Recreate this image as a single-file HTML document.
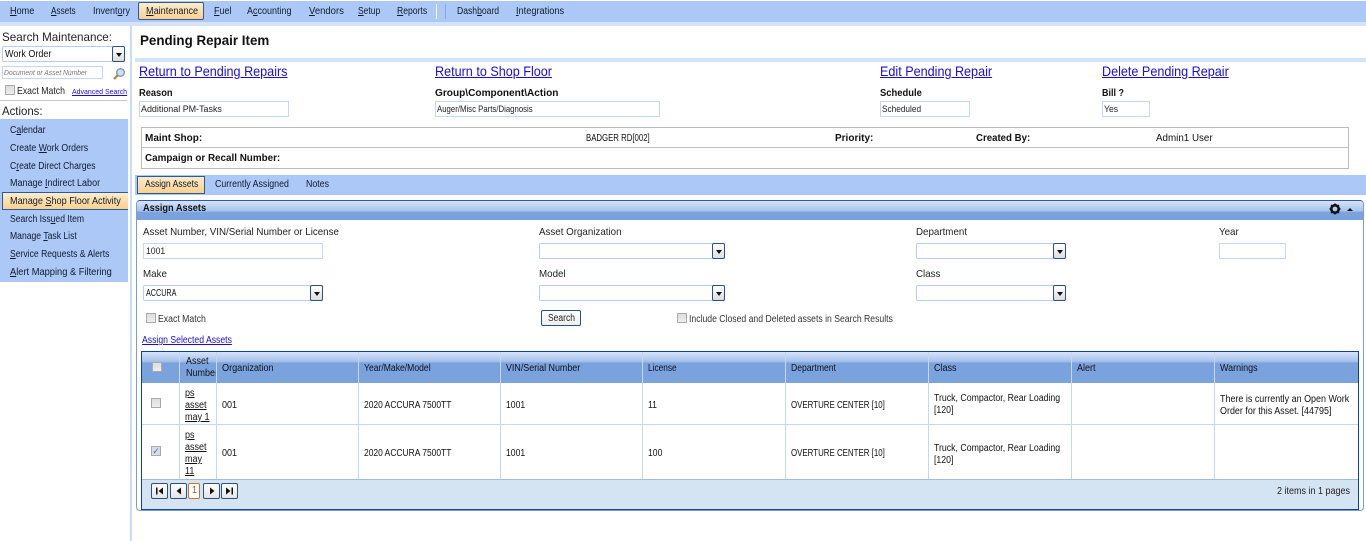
<!DOCTYPE html>
<html><head><meta charset="utf-8"><title>Pending Repair Item</title>
<style>
html,body{margin:0;padding:0;background:#fff}
body{position:relative;width:1366px;height:541px;overflow:hidden;font-family:"Liberation Sans",sans-serif;font-size:10px;color:#111}
.t,.b{position:absolute}
.t{white-space:nowrap;line-height:14px;transform:scaleX(var(--x,.91));transform-origin:0 0}
.m{top:5px;color:#0f1c2e}
.s{left:10px;color:#0f1c2e}
.l{font-size:14px;color:#1a0dd8;text-decoration:underline;top:62px;line-height:18px;--x:.9}
.h{font-weight:bold;color:#111;--x:1}
.f{font-size:10.5px;color:#222;--x:.93}
.i{position:absolute;box-sizing:border-box;background:#fff;border:1px solid #c4d7f5}
.dd{position:absolute;box-sizing:border-box;height:16px;background:#fff;border:1px solid #b9cdf0;border-radius:2px}
.dd i{position:absolute;right:-1px;top:-1px;width:13px;height:16px;box-sizing:border-box;border:1px solid #2a5184;border-radius:2px;background:linear-gradient(#fff,#ddd)}
.dd i:after{content:"";position:absolute;left:3px;top:6px;border:3px solid transparent;border-top:4px solid #111;border-bottom:0}
.cb{position:absolute;box-sizing:border-box;width:10px;height:10px;background:linear-gradient(#ddd,#eee);border:1px solid #aaa}
.v{position:absolute;width:1px;background:#c9d6ea}
.hh{position:absolute;height:1px;background:#c9d6ea}
.th{top:362px;color:#112}
.td{color:#111}
u{text-decoration:underline}
.pg{position:absolute;top:483px;width:17px;height:16px;box-sizing:border-box;border:1px solid #2a5184;border-radius:2px;background:linear-gradient(#fff,#e4e4e4)}
.pg svg{position:absolute;left:2px;top:2px}
</style></head><body>

<!-- top menu -->
<div class="b" style="left:0;top:1px;width:1366px;height:21px;background:#abc8f6"></div>
<div class="b" style="left:0;top:22px;width:1366px;height:4px;background:#d3e3fa"></div>
<div class="b" style="left:138px;top:2px;width:66px;height:18px;box-sizing:border-box;border:1px solid #2a5a9c;border-radius:2px;background:linear-gradient(#fdeccb,#fbd08e)"></div>
<div class="t m" style="left:10px"><u>H</u>ome</div>
<div class="t m" style="left:51px;--x:.82"><u>A</u>ssets</div>
<div class="t m" style="left:93px;--x:.9">Invent<u>o</u>ry</div>
<div class="t m" style="left:146px"><u>M</u>aintenance</div>
<div class="t m" style="left:214px;--x:.9"><u>F</u>uel</div>
<div class="t m" style="left:247px;--x:.9">A<u>c</u>counting</div>
<div class="t m" style="left:309px;--x:.95"><u>V</u>endors</div>
<div class="t m" style="left:358px;--x:.85"><u>S</u>etup</div>
<div class="t m" style="left:397px;--x:.86"><u>R</u>eports</div>
<div class="b" style="left:436px;top:4px;width:1px;height:15px;background:#fff"></div>
<div class="b" style="left:445px;top:4px;width:1px;height:15px;background:#8fa9d0"></div>
<div class="t m" style="left:457px;--x:.86">Dash<u>b</u>oard</div>
<div class="t m" style="left:516px;--x:.92"><u>I</u>ntegrations</div>

<!-- left panel -->
<div class="t" style="left:2px;top:30px;font-size:12px;color:#222;--x:.97">Search Maintenance:</div>
<div class="dd" style="left:2px;top:46px;width:123px;height:16px"><i></i></div>
<div class="t" style="left:5px;top:48px;--x:.9">Work Order</div>
<div class="i" style="left:2px;top:66px;width:101px;height:13px"></div>
<div class="t" style="left:4px;top:66px;font-size:7.5px;line-height:13px;font-style:italic;color:#777;--x:.9">Document or Asset Number</div>
<svg class="b" style="left:112px;top:67px" width="14" height="14" viewBox="0 0 14 14"><line x1="2" y1="12" x2="6" y2="8" stroke="#b78a3f" stroke-width="2.4"/><circle cx="8.5" cy="5.5" r="3.8" fill="#cfe0ef" stroke="#7d97b0" stroke-width="1.4"/></svg>
<div class="cb" style="left:5px;top:85px;width:10px;height:10px"></div>
<div class="t" style="left:17px;top:84px;color:#222;font-size:10.5px;--x:.83">Exact Match</div>
<div class="t" style="left:72px;top:85px;font-size:7.5px;color:#1a0dd8;text-decoration:underline;--x:.93">Advanced Search</div>
<div class="b" style="left:0;top:100px;width:127px;height:1px;background:#c8c8c8"></div>
<div class="t" style="left:2px;top:104px;font-size:12px;color:#222;--x:.95">Actions:</div>
<div class="b" style="left:0;top:119px;width:128px;height:163px;background:#abc8f6"></div>
<div class="b" style="left:2px;top:192px;width:126px;height:18px;box-sizing:border-box;border:1px solid #2a5a9c;border-right:0;background:linear-gradient(#fdeccb,#fbd08e)"></div>
<div class="t s" style="top:124px;--x:.875">C<u>a</u>lendar</div>
<div class="t s" style="top:142px;--x:.875">Create <u>W</u>ork Orders</div>
<div class="t s" style="top:160px;--x:.86">C<u>r</u>eate Direct Charges</div>
<div class="t s" style="top:177px;--x:.9">Manage <u>I</u>ndirect Labor</div>
<div class="t s" style="top:195px;--x:.91">Manage <u>S</u>hop Floor Activity</div>
<div class="t s" style="top:213px;--x:.86">Search Iss<u>u</u>ed Item</div>
<div class="t s" style="top:230px;--x:.86">Manage <u>T</u>ask List</div>
<div class="t s" style="top:248px;--x:.86"><u>S</u>ervice Requests &amp; Alerts</div>
<div class="t s" style="top:266px;--x:.93"><u>A</u>lert Mapping &amp; Filtering</div>
<div class="b" style="left:130px;top:26px;width:2px;height:515px;background:#c9dcf8"></div>

<!-- header -->
<div class="t" style="left:140px;top:31px;font-size:14px;font-weight:bold;color:#111;line-height:18px;--x:.955">Pending Repair Item</div>
<div class="b" style="left:135px;top:58px;width:1231px;height:4px;background:#d3e3fa"></div>
<div class="t l" style="left:139px">Return to Pending Repairs</div>
<div class="t l" style="left:435px">Return to Shop Floor</div>
<div class="t l" style="left:880px">Edit Pending Repair</div>
<div class="t l" style="left:1102px">Delete Pending Repair</div>
<div class="t h" style="left:139px;top:87px;--x:.93">Reason</div>
<div class="t h" style="left:435px;top:87px;--x:1.01">Group\Component\Action</div>
<div class="t h" style="left:880px;top:87px;--x:.94">Schedule</div>
<div class="t h" style="left:1102px;top:87px;--x:.9">Bill ?</div>
<div class="i" style="left:139px;top:101px;width:150px;height:16px"></div>
<div class="i" style="left:435px;top:101px;width:225px;height:16px"></div>
<div class="i" style="left:880px;top:101px;width:90px;height:16px"></div>
<div class="i" style="left:1102px;top:101px;width:48px;height:16px"></div>
<div class="t" style="left:141px;top:103px;font-size:9.5px;color:#222;--x:.94">Additional PM-Tasks</div>
<div class="t" style="left:437px;top:103px;font-size:9.5px;color:#222;--x:.82">Auger/Misc Parts/Diagnosis</div>
<div class="t" style="left:882px;top:103px;font-size:9.5px;color:#222;--x:.87">Scheduled</div>
<div class="t" style="left:1104px;top:103px;font-size:9.5px;color:#222">Yes</div>

<!-- info box -->
<div class="b" style="left:141px;top:127px;width:1208px;height:42px;box-sizing:border-box;border:1px solid #bbb"></div>
<div class="b" style="left:142px;top:147px;width:1206px;height:1px;background:#c4c4c4"></div>
<div class="t h" style="left:145px;top:132px">Maint Shop:</div>
<div class="t h" style="left:145px;top:152px;--x:.985">Campaign or Recall Number:</div>
<div class="t" style="left:586px;top:132px;--x:.78">BADGER RD[002]</div>
<div class="t h" style="left:835px;top:132px">Priority:</div>
<div class="t h" style="left:976px;top:132px;--x:.965">Created By:</div>
<div class="t" style="left:1156px;top:132px;--x:.98">Admin1 User</div>

<!-- tabs -->
<div class="b" style="left:135px;top:175px;width:1231px;height:20px;background:#abc8f6"></div>
<div class="b" style="left:137px;top:176px;width:68px;height:18px;box-sizing:border-box;border:1px solid #2a5a9c;background:linear-gradient(#fdeccb,#fbd08e)"></div>
<div class="t m" style="left:145px;top:178px;--x:.855">Assign Assets</div>
<div class="t m" style="left:215px;top:178px;--x:.88">Currently Assigned</div>
<div class="t m" style="left:306px;top:178px;--x:.88">Notes</div>

<!-- panel -->
<div class="b" style="left:136px;top:200px;width:1228px;height:311px;box-sizing:border-box;border:1px solid #7e9ccc;border-top:1px solid #2a5ab8;border-radius:4px"></div>
<div class="b" style="left:137px;top:201px;width:1226px;height:19px;background:linear-gradient(#d6e4fa 0,#a8c3ec 52%,#7aa2dc 60%,#7aa2dc 100%);border-radius:3px 3px 0 0"></div>
<div class="t h" style="left:143px;top:202px;--x:.92">Assign Assets</div>
<svg class="b" style="left:1329px;top:203px" width="12" height="12" viewBox="0 0 12 12"><circle cx="6" cy="6" r="3.7" fill="none" stroke="#111" stroke-width="2.6"/><path d="M6 0.5V2.5M6 9.5V11.5M0.5 6H2.5M9.5 6H11.5M2.1 2.1L3.5 3.5M8.5 8.5L9.9 9.9M9.9 2.1L8.5 3.5M3.5 8.5L2.1 9.9" stroke="#111" stroke-width="1.6"/></svg>
<div class="b" style="left:1347px;top:208px;border:3px solid transparent;border-bottom:3px solid #111;border-top:0"></div>

<!-- form -->
<div class="t f" style="left:143px;top:225px">Asset Number, VIN/Serial Number or License</div>
<div class="t f" style="left:539px;top:225px">Asset Organization</div>
<div class="t f" style="left:916px;top:225px;--x:.93">Department</div>
<div class="t f" style="left:1219px;top:225px">Year</div>
<div class="i" style="left:143px;top:243px;width:180px;height:16px"></div>
<div class="t" style="left:146px;top:245px;font-size:9.5px;color:#222">1001</div>
<div class="dd" style="left:539px;top:243px;width:186px"><i></i></div>
<div class="dd" style="left:916px;top:243px;width:150px"><i></i></div>
<div class="i" style="left:1219px;top:243px;width:67px;height:16px"></div>
<div class="t f" style="left:143px;top:267px">Make</div>
<div class="t f" style="left:539px;top:267px">Model</div>
<div class="t f" style="left:916px;top:267px">Class</div>
<div class="dd" style="left:143px;top:285px;width:180px"><i></i></div>
<div class="t" style="left:146px;top:287px;--x:.72">ACCURA</div>
<div class="dd" style="left:539px;top:285px;width:186px"><i></i></div>
<div class="dd" style="left:916px;top:285px;width:150px"><i></i></div>
<div class="cb" style="left:146px;top:313px"></div>
<div class="t" style="left:158px;top:313px;color:#333;--x:.87">Exact Match</div>
<div class="b" style="left:541px;top:310px;width:40px;height:16px;box-sizing:border-box;border:1px solid #2a5184;border-radius:2px;background:linear-gradient(#fff,#eee)"></div>
<div class="t" style="left:548px;top:312px;color:#222;--x:.85">Search</div>
<div class="cb" style="left:677px;top:313px"></div>
<div class="t" style="left:689px;top:313px;color:#333;--x:.865">Include Closed and Deleted assets in Search Results</div>
<div class="t" style="left:142px;top:334px;color:#1a0dd8;text-decoration:underline;--x:.865">Assign Selected Assets</div>

<!-- grid -->
<div class="b" style="left:141px;top:351px;width:1218px;height:159px;box-sizing:border-box;border:1px solid #0f3f96;background:#fff"></div>
<div class="b" style="left:142px;top:352px;width:1216px;height:31px;background:linear-gradient(#d6e4fa 0,#a6c1ec 30%,#7aa2dc 36%,#7aa2dc 100%)"></div>
<div class="b" style="left:142px;top:479px;width:1216px;height:30px;box-sizing:border-box;background:#d5e4f3;border-top:1px solid #a3bcdc"></div>
<div class="hh" style="left:142px;top:424px;width:1216px"></div>
<div class="v" style="left:179px;top:352px;height:127px"></div>
<div class="v" style="left:216px;top:352px;height:127px"></div>
<div class="v" style="left:358px;top:352px;height:127px"></div>
<div class="v" style="left:500px;top:352px;height:127px"></div>
<div class="v" style="left:642px;top:352px;height:127px"></div>
<div class="v" style="left:785px;top:352px;height:127px"></div>
<div class="v" style="left:928px;top:352px;height:127px"></div>
<div class="v" style="left:1071px;top:352px;height:127px"></div>
<div class="v" style="left:1214px;top:352px;height:127px"></div>

<div class="cb" style="left:152px;top:362px"></div>
<div class="t" style="left:186px;top:356px;width:33px;overflow:hidden;line-height:12px;--x:.9">Asset<br>Number</div>
<div class="t th" style="left:222px">Organization</div>
<div class="t th" style="left:364px;--x:.86">Year/Make/Model</div>
<div class="t th" style="left:506px;--x:.89">VIN/Serial Number</div>
<div class="t th" style="left:648px;--x:.83">License</div>
<div class="t th" style="left:791px;--x:.86">Department</div>
<div class="t th" style="left:934px;--x:.9">Class</div>
<div class="t th" style="left:1077px;--x:.9">Alert</div>
<div class="t th" style="left:1220px;--x:.9">Warnings</div>

<div class="cb" style="left:151px;top:398px"></div>
<div class="t td" style="left:185px;top:388px;line-height:12px;text-decoration:underline;--x:.9">ps<br>asset<br>may 1</div>
<div class="t td" style="left:222px;top:399px;--x:.9">001</div>
<div class="t td" style="left:364px;top:399px;--x:.845">2020 ACCURA 7500TT</div>
<div class="t td" style="left:506px;top:399px;--x:.86">1001</div>
<div class="t td" style="left:648px;top:399px;--x:.86">11</div>
<div class="t td" style="left:791px;top:399px;--x:.79">OVERTURE CENTER [10]</div>
<div class="t td" style="left:934px;top:393px;line-height:12px;--x:.875">Truck, Compactor, Rear Loading<br>[120]</div>
<div class="t td" style="left:1220px;top:394px;line-height:12px;--x:.895">There is currently an Open Work<br>Order for this Asset. [44795]</div>

<div class="cb" style="left:151px;top:446px;background:#d5dde8;color:#4a6fa8;font-size:9px;line-height:8px;text-align:center">&#10003;</div>
<div class="t td" style="left:185px;top:430px;line-height:12px;text-decoration:underline;--x:.9">ps<br>asset<br>may<br>11</div>
<div class="t td" style="left:222px;top:447px;--x:.9">001</div>
<div class="t td" style="left:364px;top:447px;--x:.845">2020 ACCURA 7500TT</div>
<div class="t td" style="left:506px;top:447px;--x:.86">1001</div>
<div class="t td" style="left:648px;top:447px;--x:.86">100</div>
<div class="t td" style="left:791px;top:447px;--x:.79">OVERTURE CENTER [10]</div>
<div class="t td" style="left:934px;top:443px;line-height:12px;--x:.875">Truck, Compactor, Rear Loading<br>[120]</div>

<div class="pg" style="left:151px"><svg width="11" height="10" viewBox="0 0 11 10"><path d="M2 1.5H3.5V8.5H2ZM9 1.5V8.5L4.5 5Z" fill="#111"/></svg></div>
<div class="pg" style="left:170px"><svg width="11" height="10" viewBox="0 0 11 10"><path d="M8 1.5V8.5L3.5 5Z" fill="#111"/></svg></div>
<div class="b" style="left:188px;top:483px;width:12px;height:16px;box-sizing:border-box;border:1px solid #c8762a;border-radius:2px;background:#fff"></div>
<div class="t" style="left:192px;top:484px;font-size:10px;color:#a5561c;--x:.9">1</div>
<div class="pg" style="left:203px"><svg width="11" height="10" viewBox="0 0 11 10"><path d="M4 1.5V8.5L8.5 5Z" fill="#111"/></svg></div>
<div class="pg" style="left:221px"><svg width="11" height="10" viewBox="0 0 11 10"><path d="M2 1.5V8.5L6.5 5ZM7.5 1.5H9V8.5H7.5Z" fill="#111"/></svg></div>
<div class="t" style="left:1277px;top:485px;color:#222;--x:.9">2 items in 1 pages</div>
</body></html>
